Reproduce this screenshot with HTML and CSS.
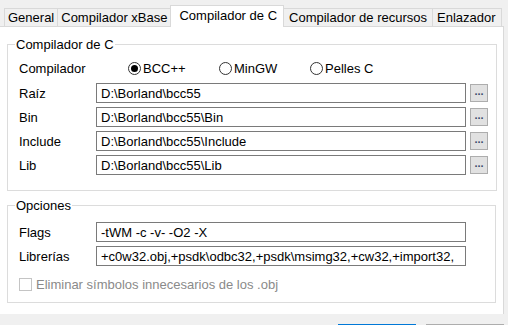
FILE: index.html
```html
<!DOCTYPE html>
<html lang="es">
<head>
    <meta charset="UTF-8">
    <title>Opciones del proyecto</title>
    <link rel="stylesheet" href="styles.css">
</head>
<body>
    <div class="tabs">
        <div class="tab">General</div>
        <div class="tab">Compilador xBase</div>
        <div class="tab active">Compilador de C</div>
        <div class="tab">Compilador de recursos</div>
        <div class="tab">Enlazador</div>
    </div>

    <div class="panel">
        <fieldset class="group">
            <legend>Compilador de C</legend>
            <div class="row radio-row">
                <span class="label">Compilador</span>
                <label class="radio"><input type="radio" name="cc" checked>BCC++</label>
                <label class="radio"><input type="radio" name="cc">MinGW</label>
                <label class="radio"><input type="radio" name="cc">Pelles C</label>
            </div>
            <div class="row">
                <span class="label">Raíz</span>
                <input class="field" type="text" value="D:\Borland\bcc55">
                <button class="browse">...</button>
            </div>
            <div class="row">
                <span class="label">Bin</span>
                <input class="field" type="text" value="D:\Borland\bcc55\Bin">
                <button class="browse">...</button>
            </div>
            <div class="row">
                <span class="label">Include</span>
                <input class="field" type="text" value="D:\Borland\bcc55\Include">
                <button class="browse">...</button>
            </div>
            <div class="row">
                <span class="label">Lib</span>
                <input class="field" type="text" value="D:\Borland\bcc55\Lib">
                <button class="browse">...</button>
            </div>
        </fieldset>

        <fieldset class="group options">
            <legend>Opciones</legend>
            <div class="row">
                <span class="label">Flags</span>
                <input class="field" type="text" value="-tWM -c -v- -O2 -X">
            </div>
            <div class="row">
                <span class="label">Librerías</span>
                <input class="field" type="text" value="+c0w32.obj,+psdk\odbc32,+psdk\msimg32,+cw32,+import32,">
            </div>
            <label class="check"><input type="checkbox" disabled>Eliminar símbolos innecesarios de los .obj</label>
        </fieldset>
    </div>

    <div class="footer">
        <button class="btn primary" aria-label="Aceptar"></button>
        <button class="btn" aria-label="Cancelar"></button>
    </div>
</body>
</html>
```

FILE: styles.css
```css
body {
    margin: 0;
    background: #f0f0f0;
    font-family: "Liberation Sans", Arial, sans-serif;
    font-size: 13px;
    color: #000;
    width: 508px;
    height: 325px;
    overflow: hidden;
}

.tabs {
    display: flex;
    align-items: flex-end;
    padding: 8px 0 0 4px;
    height: 18px;
}

.tab {
    height: 17px;
    line-height: 17px;
    padding: 0 3px;
    border: 1px solid #d9d9d9;
    border-bottom: none;
    border-right: none;
    background: #f0f0f0;
    white-space: nowrap;
}

.tab:last-child {
    border-right: 1px solid #d9d9d9;
    padding: 0 5px 0 4px;
}

.tab.active {
    height: 21px;
    line-height: 20px;
    background: #fff;
    border-right: 1px solid #d9d9d9;
    margin-bottom: -1px;
    margin-right: -1px;
    position: relative;
    padding: 0 6px 0 8px;
}

.tab.active + .tab {
    border-left: none;
    padding: 0 5px 0 6px;
}

.panel {
    width: 504px;
    height: 288px;
    background: #fff;
    border-top: 1px solid #d9d9d9;
    border-right: 1px solid #d9d9d9;
    padding: 10px 7px 0 7px;
    box-sizing: border-box;
}

.group {
    margin: 0;
    border: 1px solid #dcdcdc;
    padding: 8px 8px 15px 11px;
    display: flex;
    flex-direction: column;
    gap: 4px;
}

.group legend {
    padding: 0 1px;
    margin-left: -4px;
    line-height: 15px;
}

.group.options {
    margin-top: 7px;
    padding-top: 9px;
    padding-bottom: 10px;
}

.row {
    display: flex;
    align-items: center;
    height: 20px;
}

.radio-row {
    height: 16px;
    margin-bottom: 3px;
}

.label {
    width: 77px;
    flex: none;
}

.radio {
    display: flex;
    align-items: center;
    gap: 2px;
    width: 91px;
    flex: none;
}

.radio:first-of-type {
    margin-left: 32px;
}

.radio input {
    appearance: none;
    margin: 0;
    width: 13px;
    height: 13px;
    border: 1px solid #333;
    border-radius: 50%;
    box-sizing: border-box;
    display: grid;
    place-items: center;
}

.radio input:checked::after {
    content: "";
    width: 7px;
    height: 7px;
    border-radius: 50%;
    background: #000;
}

.field {
    width: 370px;
    height: 20px;
    box-sizing: border-box;
    border: 1px solid #7a7a7a;
    padding: 0 4px;
    margin: 0;
    font: inherit;
    color: #000;
    background: #fff;
    outline: none;
}

.browse {
    width: 18px;
    height: 18px;
    margin-left: 4px;
    padding: 0 0 4px;
    border: 1px solid #adadad;
    background: #e1e1e1;
    font: bold 11px "Liberation Sans", Arial, sans-serif;
    color: #3a4a6a;
    line-height: 10px;
}

.check {
    display: flex;
    align-items: center;
    gap: 4px;
    margin-top: 6px;
    color: #8a8a8a;
    height: 16px;
}

.check input {
    appearance: none;
    margin: 0;
    width: 13px;
    height: 13px;
    border: 1px solid #c4c4c4;
    background: #fff;
}

.footer {
    display: flex;
    justify-content: flex-end;
    gap: 10px;
    height: 11px;
    overflow: hidden;
    padding: 10px 4px 0 0;
    box-sizing: border-box;
}

.btn {
    flex: none;
    width: 78px;
    height: 23px;
    border: 1px solid #adadad;
    background: #e1e1e1;
}

.btn.primary {
    border: 2px solid #0078d7;
}
```
